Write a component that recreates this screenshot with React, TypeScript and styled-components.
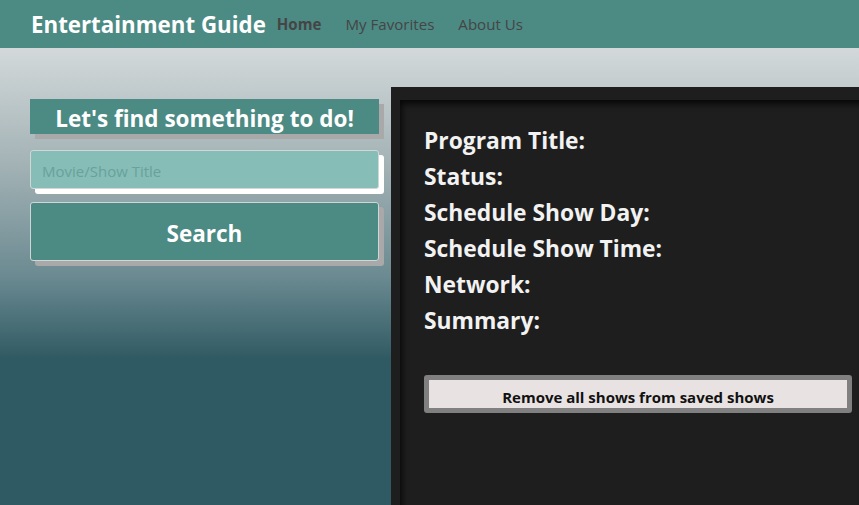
import React from 'react'
import styled, { createGlobalStyle } from 'styled-components'

const GlobalStyle = createGlobalStyle`
  html, body {
    margin: 0;
    padding: 0;
    height: 100%;
  }
  body {
    font-family: "Open Sans", "Noto Sans", sans-serif;
    overflow: hidden;
  }
  #root {
    height: 100%;
  }
`;

const Page = styled.div`
  height: 505px;
  display: flex;
  flex-direction: column;
`;

const NavBar = styled.nav`
  height: 48px;
  background: #4c8a84;
  display: flex;
  align-items: center;
  padding-left: 31px;
`;

const Brand = styled.div`
  color: #ffffff;
  font-size: 22.3px;
  font-weight: 700;
  margin-right: 11px;
`;

const NavLink = styled.a<{ $active?: boolean }>`
  color: #454545;
  font-size: 15.1px;
  font-weight: ${p => (p.$active ? 700 : 400)};
  margin-right: 24px;
  text-decoration: none;
`;

const Main = styled.main`
  flex: 1;
  display: flex;
  align-items: flex-start;
  background: linear-gradient(to bottom, #d3d9da 0%, #a4b3b6 25%, #6b8a91 50%, #305a63 68%, #305a63 100%);
`;

const SearchColumn = styled.section`
  width: 349px;
  margin: 51px 12px 0 30px;
  display: flex;
  flex-direction: column;
`;

const Heading = styled.h2`
  margin: 0 0 16px;
  height: 35px;
  box-sizing: border-box;
  padding-top: 3px;
  background: #4c8a84;
  color: #ffffff;
  font-size: 22.5px;
  font-weight: 700;
  display: flex;
  align-items: center;
  justify-content: center;
  box-shadow: 5px 5px 0 #a9a9a9;
`;

const TitleInput = styled.input`
  height: 39px;
  box-sizing: border-box;
  background: #86bdb7;
  border: 1px solid #d0d8d6;
  border-radius: 3px;
  padding: 2px 11px 0;
  font-family: inherit;
  font-size: 15px;
  box-shadow: 5px 5px 0 #ffffff;
  margin-bottom: 13px;
  outline: none;

  &::placeholder {
    color: #69a19b;
  }
`;

const SearchButton = styled.button`
  height: 59px;
  background: #4c8a84;
  border: 1px solid #cfd6d5;
  border-radius: 3px;
  color: #ffffff;
  font-family: inherit;
  font-size: 22.5px;
  font-weight: 700;
  padding-top: 4px;
  box-shadow: 5px 5px 0 #a9a9a9;
  cursor: pointer;
`;

const ResultsPanel = styled.section`
  flex: 1;
  align-self: stretch;
  margin-top: 39px;
  background: #1e1e1e;
  padding: 13px 0 0 9px;
  display: flex;
`;

const ResultsInner = styled.div`
  flex: 1;
  box-shadow: inset 4px 6px 6px -2px rgba(0, 0, 0, 0.75);
  padding: 23px 7px 0 24px;
`;

const Field = styled.div`
  color: #f2f2f2;
  font-size: 22.8px;
  font-weight: 700;
  height: 36px;
  line-height: 36px;
`;

const ClearButton = styled.button`
  margin-top: 36px;
  width: 100%;
  height: 38px;
  background: #e8e2e2;
  border: 5px solid #808080;
  border-radius: 3px;
  font-family: inherit;
  font-size: 15px;
  font-weight: 700;
  color: #111111;
  padding: 6px 0 0;
  cursor: pointer;
`;

const fields = [
  'Program Title:',
  'Status:',
  'Schedule Show Day:',
  'Schedule Show Time:',
  'Network:',
  'Summary:',
]

const App = () => {
  return (
    <Page>
      <GlobalStyle />
      <NavBar>
        <Brand>Entertainment Guide</Brand>
        <NavLink href="#" $active>Home</NavLink>
        <NavLink href="#">My Favorites</NavLink>
        <NavLink href="#">About Us</NavLink>
      </NavBar>
      <Main>
        <SearchColumn>
          <Heading>Let's find something to do!</Heading>
          <TitleInput placeholder="Movie/Show Title" />
          <SearchButton>Search</SearchButton>
        </SearchColumn>
        <ResultsPanel>
          <ResultsInner>
            {fields.map(f => (
              <Field key={f}>{f}</Field>
            ))}
            <ClearButton>Remove all shows from saved shows</ClearButton>
          </ResultsInner>
        </ResultsPanel>
      </Main>
    </Page>
  )
}

export default App
